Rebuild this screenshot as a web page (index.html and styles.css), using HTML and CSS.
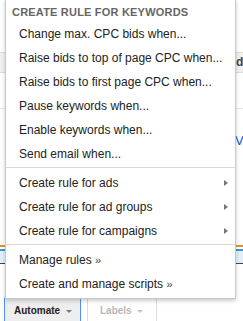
FILE: index.html
```html
<!DOCTYPE html>
<html>
<head>
  <meta charset="utf-8">
  <title>Automate menu</title>
  <link rel="stylesheet" href="styles.css">
</head>
<body>
  <div class="page">
    <div class="spacer-top"></div>
    <div class="table-head"><span class="col-label">d</span></div>
    <div class="table-row row-a"></div>
    <div class="table-row row-b"><span class="row-link">V</span></div>
    <div class="table-row row-c"></div>
    <div class="chart">
      <div class="chart-orange"></div>
      <div class="chart-blue"></div>
      <div class="chart-fill"></div>
    </div>
    <div class="spacer-bottom"></div>

    <div class="toolbar">
      <div class="tool-btn active">Automate <span class="caret"></span></div>
      <div class="tool-btn disabled">Labels <span class="caret"></span></div>
    </div>
  </div>

  <!-- dropdown opened from the Automate button -->
  <div class="menu">
    <div class="menu-header">Create rule for keywords</div>
    <div class="menu-item">Change max. CPC bids when...</div>
    <div class="menu-item">Raise bids to top of page CPC when...</div>
    <div class="menu-item">Raise bids to first page CPC when...</div>
    <div class="menu-item">Pause keywords when...</div>
    <div class="menu-item">Enable keywords when...</div>
    <div class="menu-item">Send email when...</div>
    <div class="menu-sep"></div>
    <div class="menu-item has-sub">Create rule for ads <span class="sub-arrow"></span></div>
    <div class="menu-item has-sub">Create rule for ad groups <span class="sub-arrow"></span></div>
    <div class="menu-item has-sub">Create rule for campaigns <span class="sub-arrow"></span></div>
    <div class="menu-sep"></div>
    <div class="menu-item">Manage rules <span class="raquo">»</span></div>
    <div class="menu-item">Create and manage scripts <span class="raquo">»</span></div>
  </div>
</body>
</html>
```

FILE: styles.css
```css
body {
  font-family: "Liberation Sans", Arial, sans-serif;
  margin: 0;
  width: 243px;
  height: 321px;
  overflow: hidden;
  background: #ffffff;
  position: relative;
}

.page {
  height: 321px;
}

.spacer-top {
  height: 52px;
}

.table-head {
  height: 19px;
  background: #f1f1f1;
  border-top: 1px solid #dcdcdc;
  border-bottom: 1px solid #dcdcdc;
  font-size: 12px;
  font-weight: bold;
  line-height: 19px;
  color: #444;
  white-space: nowrap;
  overflow: hidden;
  padding-left: 236px;
}

.row-a {
  height: 35px;
  border-bottom: 1px solid #e5e5e5;
}

.row-b {
  height: 56px;
  box-sizing: border-box;
  padding: 20px 0 0 235px;
  font-size: 13px;
  line-height: 24px;
  color: #1155cc;
  white-space: nowrap;
  overflow: hidden;
}

.row-c {
  height: 80px;
}

.chart {
  height: 18px;
  border-bottom: 1px solid #444;
}

.chart-orange {
  height: 2px;
  background: #f08a24;
}

.chart-blue {
  height: 2px;
  margin-top: 2px;
  background: #3399dd;
}

.chart-fill {
  height: 12px;
  background: #e2eff8;
}

.spacer-bottom {
  height: 33px;
}

.toolbar {
  display: flex;
  gap: 6px;
  padding-left: 4px;
}

.tool-btn {
  height: 26px;
  line-height: 26px;
  font-size: 10px;
  font-weight: bold;
  box-sizing: border-box;
  border: 1px solid #dcdcdc;
  border-bottom: none;
  border-radius: 2px 2px 0 0;
  white-space: nowrap;
}

.tool-btn.active {
  width: 77px;
  padding-left: 9px;
  background: #eeeeee;
  border-color: #4d90fe;
  color: #222;
}

.tool-btn.disabled {
  width: 70px;
  padding-left: 12px;
  background: #ffffff;
  color: #b8b8b8;
}

.caret {
  display: inline-block;
  width: 0;
  height: 0;
  border-left: 3px solid transparent;
  border-right: 3px solid transparent;
  border-top: 3px solid #777;
  vertical-align: middle;
  margin-left: 3px;
}

.tool-btn.disabled .caret {
  border-top-color: #c4c4c4;
}

/* dropdown */
.menu {
  position: absolute;
  left: 5px;
  top: -1px;
  width: 229px;
  background: #ffffff;
  border: 1px solid #c8c8c8;
  border-top: none;
  box-shadow: 0 2px 4px rgba(0, 0, 0, 0.2);
  padding: 0 0 2px;
}

.menu-header {
  height: 20px;
  padding: 3px 0 0 6px;
  font-size: 11px;
  font-weight: bold;
  letter-spacing: 0.2px;
  text-transform: uppercase;
  color: #666;
  line-height: 20px;
  white-space: nowrap;
}

.menu-item {
  position: relative;
  height: 24px;
  line-height: 24px;
  padding-left: 13px;
  font-size: 12px;
  color: #222;
  white-space: nowrap;
}

.menu-sep {
  height: 1px;
  background: #d9d9d9;
  margin: 1px 0 3px;
}

.sub-arrow {
  position: absolute;
  right: 7px;
  top: 9px;
  width: 0;
  height: 0;
  border-top: 3px solid transparent;
  border-bottom: 3px solid transparent;
  border-left: 4px solid #777;
}

.raquo {
  font-size: 11px;
  color: #444;
}
```
